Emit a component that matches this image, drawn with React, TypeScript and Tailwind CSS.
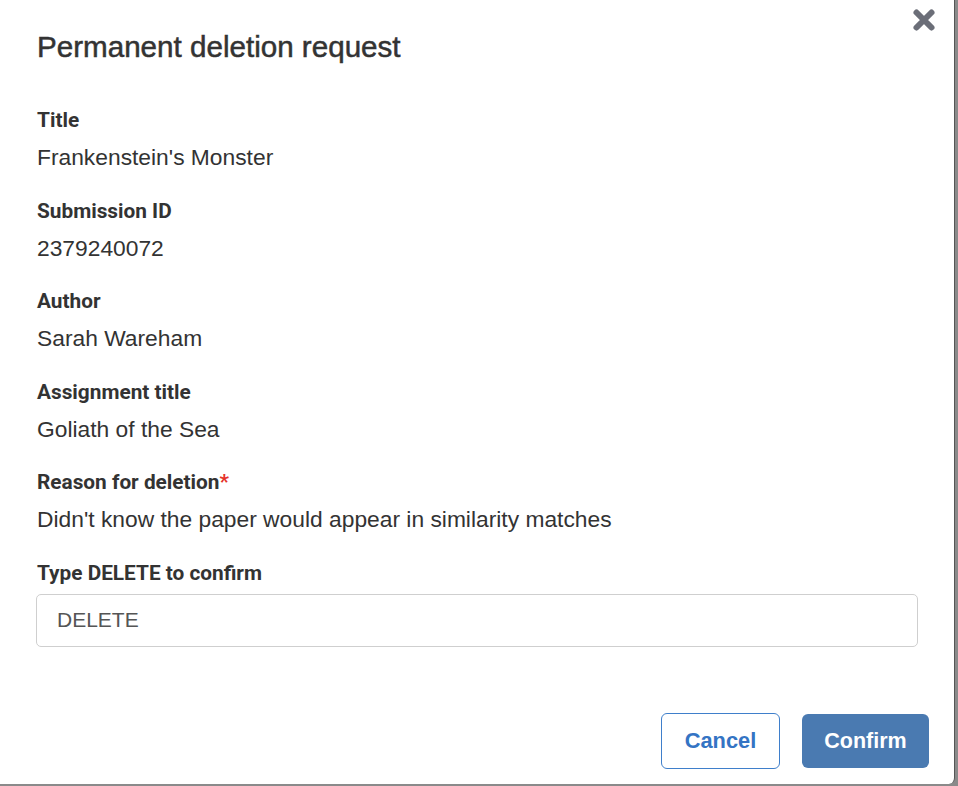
import React from "react";

const fields: { label: string; value: string; required?: boolean }[] = [
  { label: "Title", value: "Frankenstein's Monster" },
  { label: "Submission ID", value: "2379240072" },
  { label: "Author", value: "Sarah Wareham" },
  { label: "Assignment title", value: "Goliath of the Sea" },
  { label: "Reason for deletion", value: "Didn't know the paper would appear in similarity matches", required: true },
];

export default function App() {
  return (
    <div className="w-[958px] h-[786px] bg-[#8a8a8a] overflow-hidden">
      <div className="relative w-[955px] h-[784px] bg-white rounded-br-[6px] border-r border-[#555] text-[#333] font-['Liberation_Sans',Arial,sans-serif]">
        <button className="absolute left-[911px] top-[7px] w-[26px] h-[26px] flex items-center justify-center" aria-label="Close">
          <svg width="24" height="24" viewBox="0 0 24 24">
            <path d="M4.5 4.5 L19.5 19.5 M19.5 4.5 L4.5 19.5" stroke="#6b6e78" strokeWidth="6" strokeLinecap="round" />
          </svg>
        </button>
        <div className="pl-[37px] pr-[37px] pt-[31px]">
          <h1 className="text-[29.6px] leading-[32px] font-normal [-webkit-text-stroke:0.5px_#333]">Permanent deletion request</h1>
          <div className="mt-[43px] flex flex-col gap-[25.5px]">
            {fields.map((f) => (
              <div key={f.label} className="flex flex-col gap-[9px]">
                <div className="text-[20.8px] leading-[28px] font-bold font-['Roboto',sans-serif]">
                  {f.label}
                  {f.required && <span className="text-[#e5332a]">*</span>}
                </div>
                <div className="text-[22.8px] leading-[28px]">{f.value}</div>
              </div>
            ))}
            <div className="flex flex-col gap-[7px]">
              <div className="text-[20.8px] leading-[28px] font-bold font-['Roboto',sans-serif]">Type DELETE to confirm</div>
              <div className="w-[882px] -ml-[1px] h-[53px] border border-[#cfcfcf] rounded-[5px] flex items-center px-[20px] text-[21px] text-[#555]">
                DELETE
              </div>
            </div>
          </div>
        </div>
        <div className="absolute left-[661px] top-[713px] flex gap-[22px]">
          <button className="w-[119px] h-[56px] rounded-[6px] border border-[#3f7fcb] bg-white text-[#3474c4] text-[21.8px] font-bold">
            Cancel
          </button>
          <button className="w-[127px] h-[54px] mt-[1px] rounded-[6px] bg-[#4a7ab1] text-white text-[21.5px] font-bold">
            Confirm
          </button>
        </div>
      </div>
    </div>
  );
}
